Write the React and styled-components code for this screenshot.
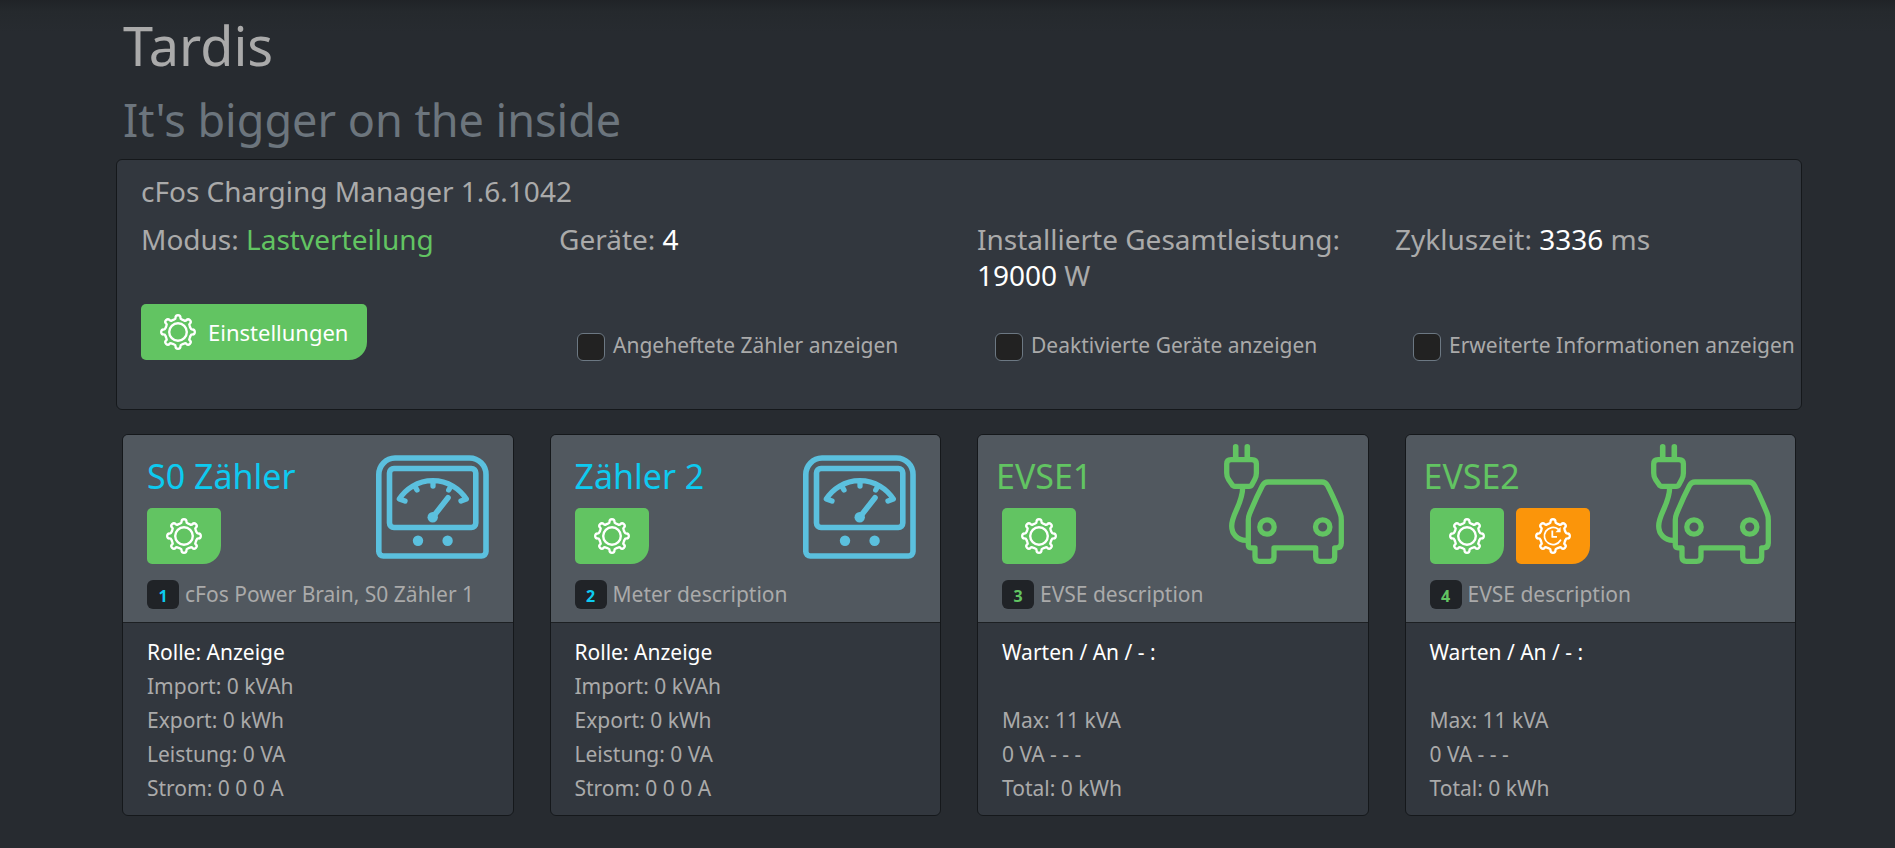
import React from "react";
import styled, { createGlobalStyle, css } from "styled-components";

const GlobalStyle = createGlobalStyle`
  *, *::before, *::after { box-sizing: border-box; }
  body {
    margin: 0;
    background: #272b30 linear-gradient(#202327, #25292d 12px, #272b30 32px) no-repeat top / 100% 32px;
    color: #aaa;
    font-family: "Noto Sans", sans-serif;
    font-size: 21px;
    line-height: 34px;
  }
`;

const tones = {
  meter: { title: "#0dcaf0", icon: "#5bc0de" },
  evse: { title: "#62c462", icon: "#62c462" },
};

const Page = styled.main`
  padding: 12px 93px 32px 116px;
`;

const Heading = styled.h1`
  margin: 0 0 15px;
  padding-left: 7px;
  font-size: 54px;
  font-weight: 400;
  line-height: 66px;
`;

const Tagline = styled.h2`
  margin: 0 0 12px;
  padding-left: 7px;
  color: #6c757d;
  font-size: 45px;
  font-weight: 400;
  line-height: 54px;
`;

const box = css`
  background: #32373e;
  border: 1px solid #15181b;
  border-radius: 6px;
`;

const Panel = styled.section`
  ${box}
  padding: 13px 0 48px 12px;
  margin-bottom: 24px;
`;

const PanelTitle = styled.h3`
  margin: 0 0 12px;
  padding: 0 12px;
  font-size: 28px;
  font-weight: 400;
  line-height: 36px;
`;

const Columns = styled.div`
  display: grid;
  grid-template-columns: repeat(4, minmax(0, 1fr));
`;

const StatRow = styled(Columns)`
  margin-bottom: 11px;
`;

const Stat = styled.div`
  padding: 0 12px;
  font-size: 28px;
  line-height: 36px;
`;

const Value = styled.span`
  color: ${(p) => (p.$active ? "#62c462" : "#fff")};
`;

const ButtonCell = styled.div`
  padding: 0 12px;
`;

const Button = styled.button`
  display: inline-flex;
  align-items: center;
  justify-content: center;
  gap: 12px;
  height: 56px;
  padding: 0 19px;
  border: 0;
  border-radius: 5px 5px 18px 5px;
  background: ${(p) => (p.$schedule ? "#fb950a" : "#62c462")};
  color: #fff;
  font: inherit;
  font-size: 22px;
  cursor: pointer;
  vertical-align: top;
`;

const Option = styled.label`
  display: flex;
  align-items: flex-start;
  gap: 8px;
  padding: 25px 0 0 30px;
  line-height: 32px;
  white-space: nowrap;
`;

const Checkbox = styled.input`
  appearance: none;
  flex: none;
  width: 28px;
  height: 28px;
  margin: 4px 0 0;
  border: 1px solid #6c7883;
  border-radius: 6px;
  background: #222;

  &:checked { background: #62c462; }
`;

const Devices = styled.section`
  display: grid;
  grid-template-columns: repeat(4, minmax(0, 1fr));
  gap: 36px;
  padding: 0 6px;
`;

const Card = styled.article`
  ${box}
  overflow: hidden;
`;

const CardHeader = styled.header`
  padding: 9px 24px 13px 18px;
  background: #51585f;
  border-bottom: 1px solid #1d2023;
`;

const HeaderTop = styled.div`
  display: flex;
  justify-content: space-between;
  margin-bottom: 16px;
`;

const CardTitle = styled.h3`
  margin: 10px 0;
  padding-left: ${(p) => (p.$kind === "meter" ? "6px" : "0")};
  color: ${(p) => tones[p.$kind].title};
  font-size: 34px;
  font-weight: 400;
  line-height: 44px;
`;

const Actions = styled.div`
  display: flex;
  gap: 12px;
  padding-left: 6px;
`;

const DeviceIcon = styled.svg`
  flex: none;
  width: 120px;
  height: 120px;
  fill: none;
  stroke: ${(p) => tones[p.$kind].icon};
  stroke-width: 5.3;
  stroke-linecap: round;
  stroke-linejoin: round;
`;

const Description = styled.div`
  display: flex;
  gap: 6px;
  padding-left: 6px;
  line-height: 29px;
  white-space: nowrap;
`;

const Badge = styled.span`
  width: 32px;
  height: 29px;
  border-radius: 6px;
  background: #202327;
  color: ${(p) => tones[p.$kind].title};
  font-size: 16px;
  font-weight: 700;
  line-height: 32px;
  text-align: center;
`;

const Readings = styled.ul`
  margin: 0;
  padding: 12px 24px 10px;
  list-style: none;
`;

const Reading = styled.li`
  min-height: 34px;
  color: ${(p) => (p.$lead ? "#fff" : "inherit")};
`;

const GearSvg = styled.svg`
  width: 36px;
  height: 36px;
  fill: none;
  stroke: #fff;
  stroke-width: 2.4;
  stroke-linecap: round;
  stroke-linejoin: round;
`;

// Outline of a cog with eight rounded teeth, centred on the origin.
const polar = (radius, degrees) => {
  const a = (degrees * Math.PI) / 180;
  return `${(radius * Math.cos(a)).toFixed(2)} ${(radius * Math.sin(a)).toFixed(2)}`;
};

const cogPath =
  Array.from({ length: 8 }, (_, i) => {
    const a = i * 45 - 90;
    return [
      `${i ? "L" : "M"}${polar(13.1, a - 18)}`,
      `Q${polar(13.2, a - 10)} ${polar(14.6, a - 9.5)}`,
      `Q${polar(17, a - 9)} ${polar(16.8, a)}`,
      `Q${polar(17, a + 9)} ${polar(14.6, a + 9.5)}`,
      `Q${polar(13.2, a + 10)} ${polar(13.1, a + 18)}`,
    ].join("");
  }).join("") + "Z";

function Gear({ clock }) {
  return (
    <GearSvg viewBox="-18 -18 36 36" aria-hidden="true">
      <path d={cogPath} />
      {clock ? (
        <>
          <path strokeWidth="1.8" d="M5 -7A8.6 8.6 0 1 0 7.5 4.2" />
          <path strokeWidth="1.8" strokeLinecap="butt" d="M-.7 -5.5V.9H4" />
          <path stroke="none" fill="#fff" d="M7.6 -9V-3.8H2.4Z" />
        </>
      ) : (
        <circle r="8.8" />
      )}
    </GearSvg>
  );
}

function MeterIcon() {
  return (
    <DeviceIcon $kind="meter" viewBox="0 0 120 120" aria-hidden="true">
      <path strokeWidth="5.6" d="M26 14H100.500A16.500 16.500 0 0 1 117 30.500V107.500A4.500 4.500 0 0 1 112.500 112H14.300A4.500 4.500 0 0 1 9.800 107.500V30.500A16.500 16.500 0 0 1 26 14Z" />
      <rect strokeWidth="5.6" x="20.5" y="24.500" width="86.300" height="59" rx="4.500" />
      <path d="M36 57L30.300 55A39.700 39.700 0 0 1 97.300 55L92 57M45.700 42L48 46M64 37V42M82 42L79.700 46" />
      <path strokeWidth="5.600" d="M79 53.700L63.700 73.300" />
      <g fill="#5bc0de" stroke="none">
        <circle cx="63.700" cy="73.300" r="5.200" />
        <circle cx="49" cy="96.800" r="5.200" />
        <circle cx="78.600" cy="96.800" r="5.200" />
      </g>
    </DeviceIcon>
  );
}

function CarIcon() {
  return (
    <DeviceIcon $kind="evse" viewBox="0 0 120 120" aria-hidden="true">
      <path strokeWidth="5.600" d="M11.700 2.800V14M23.300 2.800V14" />
      <path d="M7 15.700H28Q32.400 15.700 32.400 20V29Q32.400 32.500 30.700 35.500L28 40.500Q27 42.300 25.200 42.300H10.800Q9 42.300 8 40.500L4.500 35.500Q2.700 32.500 2.700 29V20Q2.700 15.700 7 15.700Z" />
      <path strokeLinecap="butt" d="M18.700 43C18.700 60 7.700 70 7.700 82C7.700 90 13.500 96.300 22 96.300" />
      <path d="M44 38H98Q101.500 38 103.500 41.500Q109 52 116 69Q117.300 72 117.300 76V99Q117.300 103.800 112.500 103.800H110.700V113Q110.700 117.300 106.400 117.300H96Q91.700 117.300 91.700 113V103.800H50V113Q50 117.300 45.700 117.300H35.300Q31 117.300 31 113V103.800H27Q24.300 103.800 24.300 101V76Q24.300 73 25.500 70Q32 54 38.500 41.500Q40.500 38 44 38Z" />
      <circle cx="43" cy="83" r="7.200" />
      <circle cx="98.700" cy="83" r="7.200" />
    </DeviceIcon>
  );
}

const meterReadings = [
  "Rolle: Anzeige",
  "Import: 0 kVAh",
  "Export: 0 kWh",
  "Leistung: 0 VA",
  "Strom: 0 0 0 A",
];
const evseReadings = ["Warten / An / - :", "", "Max: 11 kVA", "0 VA - - -", "Total: 0 kWh"];

const devices = [
  { id: 1, kind: "meter", name: "S0 Zähler", description: "cFos Power Brain, S0 Zähler 1", readings: meterReadings },
  { id: 2, kind: "meter", name: "Zähler 2", description: "Meter description", readings: meterReadings },
  { id: 3, kind: "evse", name: "EVSE1", description: "EVSE description", readings: evseReadings },
  { id: 4, kind: "evse", name: "EVSE2", description: "EVSE description", readings: evseReadings, schedule: true },
];

const options = [
  { id: "pinned", label: "Angeheftete Zähler anzeigen" },
  { id: "disabled", label: "Deaktivierte Geräte anzeigen" },
  { id: "extended", label: "Erweiterte Informationen anzeigen" },
];

function DeviceCard({ device }) {
  const { id, kind, name, description, readings, schedule } = device;
  return (
    <Card>
      <CardHeader>
        <HeaderTop>
          <div>
            <CardTitle $kind={kind}>{name}</CardTitle>
            <Actions>
              <Button type="button" aria-label="Einstellungen">
                <Gear />
              </Button>
              {schedule && (
                <Button type="button" $schedule aria-label="Ladeplan">
                  <Gear clock />
                </Button>
              )}
            </Actions>
          </div>
          {kind === "meter" ? <MeterIcon /> : <CarIcon />}
        </HeaderTop>
        <Description>
          <Badge $kind={kind}>{id}</Badge>
          <span>{description}</span>
        </Description>
      </CardHeader>
      <Readings>
        {readings.map((text, i) => (
          <Reading key={i} $lead={i === 0}>
            {text}
          </Reading>
        ))}
      </Readings>
    </Card>
  );
}

export default function App() {
  return (
    <>
      <GlobalStyle />
      <Page>
        <Heading>Tardis</Heading>
        <Tagline>It's bigger on the inside</Tagline>
        <Panel>
          <PanelTitle>cFos Charging Manager 1.6.1042</PanelTitle>
          <StatRow>
            <Stat>
              Modus: <Value $active>Lastverteilung</Value>
            </Stat>
            <Stat>
              Geräte: <Value>4</Value>
            </Stat>
            <Stat>
              Installierte Gesamtleistung: <Value>19000</Value> W
            </Stat>
            <Stat>
              Zykluszeit: <Value>3336</Value> ms
            </Stat>
          </StatRow>
          <Columns>
            <ButtonCell>
              <Button type="button">
                <Gear />
                Einstellungen
              </Button>
            </ButtonCell>
            {options.map((o) => (
              <Option key={o.id} htmlFor={o.id}>
                <Checkbox type="checkbox" id={o.id} />
                {o.label}
              </Option>
            ))}
          </Columns>
        </Panel>
        <Devices>
          {devices.map((d) => (
            <DeviceCard key={d.id} device={d} />
          ))}
        </Devices>
      </Page>
    </>
  );
}
